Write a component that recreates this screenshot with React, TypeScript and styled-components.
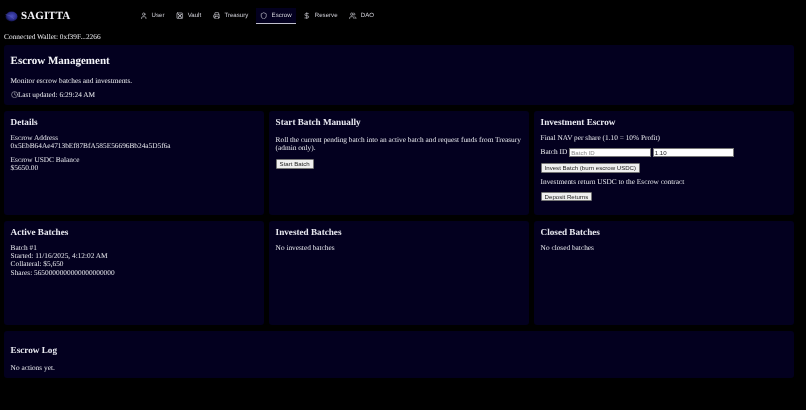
import React from 'react';
import styled, { createGlobalStyle } from 'styled-components';
import { User, Vault, Printer, Shield, DollarSign, Users, Clock } from 'lucide-react';

const GlobalStyle = createGlobalStyle`
  html, body {
    margin: 0;
    padding: 0;
    background: #000;
    color: #eeeef2;
    font-family: "Liberation Serif", "Times New Roman", serif;
    font-size: 7.33px;
    line-height: 8.25px;
    text-rendering: geometricPrecision;
  }
`;

// the reference is a downscaled capture, so everything is a little soft
const Page = styled.div`
  width: 806px;
  height: 410px;
  overflow: hidden;
  background: #000;
  filter: blur(0.3px);
`;

const TopBar = styled.header`
  display: flex;
  align-items: center;
  height: 32px;
  padding: 0 4px 0 5px;
`;

const Brand = styled.div`
  display: flex;
  align-items: center;
  gap: 3px;
  width: 130.7px;
  font-size: 11px;
  font-weight: 700;
  letter-spacing: 0.1px;
  color: #f5f5fa;
`;

const Nav = styled.nav`
  display: flex;
  align-items: center;
  gap: 3px;
`;

const NavItem = styled.a<{ $active?: boolean }>`
  display: flex;
  align-items: center;
  gap: 4px;
  height: 16px;
  padding: 0 4.4px;
  box-sizing: border-box;
  font-family: "Liberation Sans", Arial, sans-serif;
  font-size: 6.1px;
  line-height: 10px;
  color: #d4d4dc;
  background: ${p => (p.$active ? '#03001f' : 'transparent')};
  border-bottom: 1px solid ${p => (p.$active ? '#c0c0cc' : 'transparent')};
`;

const Wallet = styled.div`
  padding: 0 4px;
  height: 13.3px;
  line-height: 9px;
`;

const Content = styled.main`
  display: flex;
  flex-direction: column;
  gap: 5.5px;
  width: 790px;
  margin-left: 4px;
`;

const Card = styled.section`
  box-sizing: border-box;
  background: #03001f;
  border-radius: 3px;
  padding: 6.5px 6.6px;
`;

const Hero = styled(Card)`
  height: 60px;
`;

const HeroTitle = styled.h1`
  margin: 3.5px 0 0;
  font-size: 11px;
  line-height: 13px;
  color: #f5f5fa;
`;

const HeroText = styled.p`
  margin: 8px 0 0;
  line-height: 9px;
`;

const Updated = styled.div`
  display: flex;
  align-items: center;
  margin-top: 5px;
  line-height: 9px;
`;

const Grid = styled.div`
  display: grid;
  grid-template-columns: repeat(3, 260px);
  grid-auto-rows: 104.6px;
  gap: 5.5px 5px;
`;

const CardTitle = styled.h2`
  margin: 0 0 5.5px;
  font-size: 9.16px;
  line-height: 11px;
  color: #e8e8f0;
`;

const Line = styled.div<{ $gap?: number }>`
  margin-bottom: ${p => p.$gap ?? 0}px;
  color: #e8e8ee;
`;

const Paragraph = styled(Line)`
  margin-top: 7.5px;
`;

const ReturnsNote = styled(Line)`
  margin-top: 5.5px;
`;

const ActionButton = styled.button`
  display: block;
  height: 9.5px;
  box-sizing: border-box;
  padding: 0 3px;
  margin: 0;
  background: #efefef;
  border: 0.5px solid #767676;
  border-radius: 1px;
  font-family: "Liberation Sans", Arial, sans-serif;
  font-size: 6.1px;
  line-height: 8px;
  color: #222;
`;

const BatchRow = styled.div`
  display: flex;
  align-items: center;
  gap: 2px;
  margin-bottom: 6px;
`;

const Field = styled.input`
  box-sizing: border-box;
  width: 81.5px;
  height: 9.5px;
  padding: 0 1px;
  background: #fff;
  border: 0.5px solid #767676;
  border-radius: 0;
  outline: none;
  font-family: "Liberation Sans", Arial, sans-serif;
  font-size: 6.1px;
  color: #222;

  &::placeholder {
    color: #8a8a8a;
  }
`;

const LogCard = styled(Card)`
  height: 47px;
  padding-top: 14px;
`;

const LogTitle = styled(CardTitle)`
  margin-bottom: 8px;
`;

const navItems = [
  { label: 'User', Icon: User },
  { label: 'Vault', Icon: Vault },
  { label: 'Treasury', Icon: Printer },
  { label: 'Escrow', Icon: Shield, active: true },
  { label: 'Reserve', Icon: DollarSign },
  { label: 'DAO', Icon: Users },
];

function Logo() {
  return (
    <svg width="13" height="11" viewBox="0 0 13 11">
      <defs>
        <radialGradient id="orb" cx="0.55" cy="0.45" r="0.55">
          <stop offset="0" stopColor="#4a4fc0" />
          <stop offset="0.7" stopColor="#2a2c88" />
          <stop offset="1" stopColor="#101040" />
        </radialGradient>
      </defs>
      <ellipse cx="6.5" cy="5.5" rx="6" ry="5" fill="url(#orb)" />
      <path d="M0.5 3.5 Q5 3.5 9 8" stroke="#6f74c8" strokeWidth="0.6" fill="none" opacity="0.6" />
    </svg>
  );
}

export default function App() {
  return (
    <Page>
      <GlobalStyle />
      <TopBar>
        <Brand>
          <Logo />
          SAGITTA
        </Brand>
        <Nav>
          {navItems.map(({ label, Icon, active }) => (
            <NavItem key={label} $active={active}>
              <Icon size={7.5} strokeWidth={2} />
              {label}
            </NavItem>
          ))}
        </Nav>
      </TopBar>
      <Wallet>Connected Wallet: 0xf39F...2266</Wallet>
      <Content>
        <Hero>
          <HeroTitle>Escrow Management</HeroTitle>
          <HeroText>Monitor escrow batches and investments.</HeroText>
          <Updated>
            <Clock size={7.3} strokeWidth={1.5} />
            Last updated: 6:29:24 AM
          </Updated>
        </Hero>
        <Grid>
          <Card>
            <CardTitle>Details</CardTitle>
            <Line>Escrow Address</Line>
            <Line $gap={5.5}>0x5EbB64Ae4713bEf87BfA585E56696Bb24a5D5f6a</Line>
            <Line>Escrow USDC Balance</Line>
            <Line>$5650.00</Line>
          </Card>
          <Card>
            <CardTitle>Start Batch Manually</CardTitle>
            <Paragraph $gap={7}>Roll the current pending batch into an active batch and request funds from Treasury (admin only).</Paragraph>
            <ActionButton>Start Batch</ActionButton>
          </Card>
          <Card>
            <CardTitle>Investment Escrow</CardTitle>
            <Line $gap={5.5}>Final NAV per share (1.10 = 10% Profit)</Line>
            <BatchRow>
              Batch ID
              <Field placeholder="Batch ID" />
              <Field defaultValue="1.10" />
            </BatchRow>
            <ActionButton>Invest Batch (burn escrow USDC)</ActionButton>
            <ReturnsNote $gap={5.5}>Investments return USDC to the Escrow contract</ReturnsNote>
            <ActionButton>Deposit Returns</ActionButton>
          </Card>
          <Card>
            <CardTitle>Active Batches</CardTitle>
            <Line>Batch #1</Line>
            <Line>Started: 11/16/2025, 4:12:02 AM</Line>
            <Line>Collateral: $5,650</Line>
            <Line>Shares: 5650000000000000000000</Line>
          </Card>
          <Card>
            <CardTitle>Invested Batches</CardTitle>
            <Line>No invested batches</Line>
          </Card>
          <Card>
            <CardTitle>Closed Batches</CardTitle>
            <Line>No closed batches</Line>
          </Card>
        </Grid>
        <LogCard>
          <LogTitle>Escrow Log</LogTitle>
          <Line>No actions yet.</Line>
        </LogCard>
      </Content>
    </Page>
  );
}
